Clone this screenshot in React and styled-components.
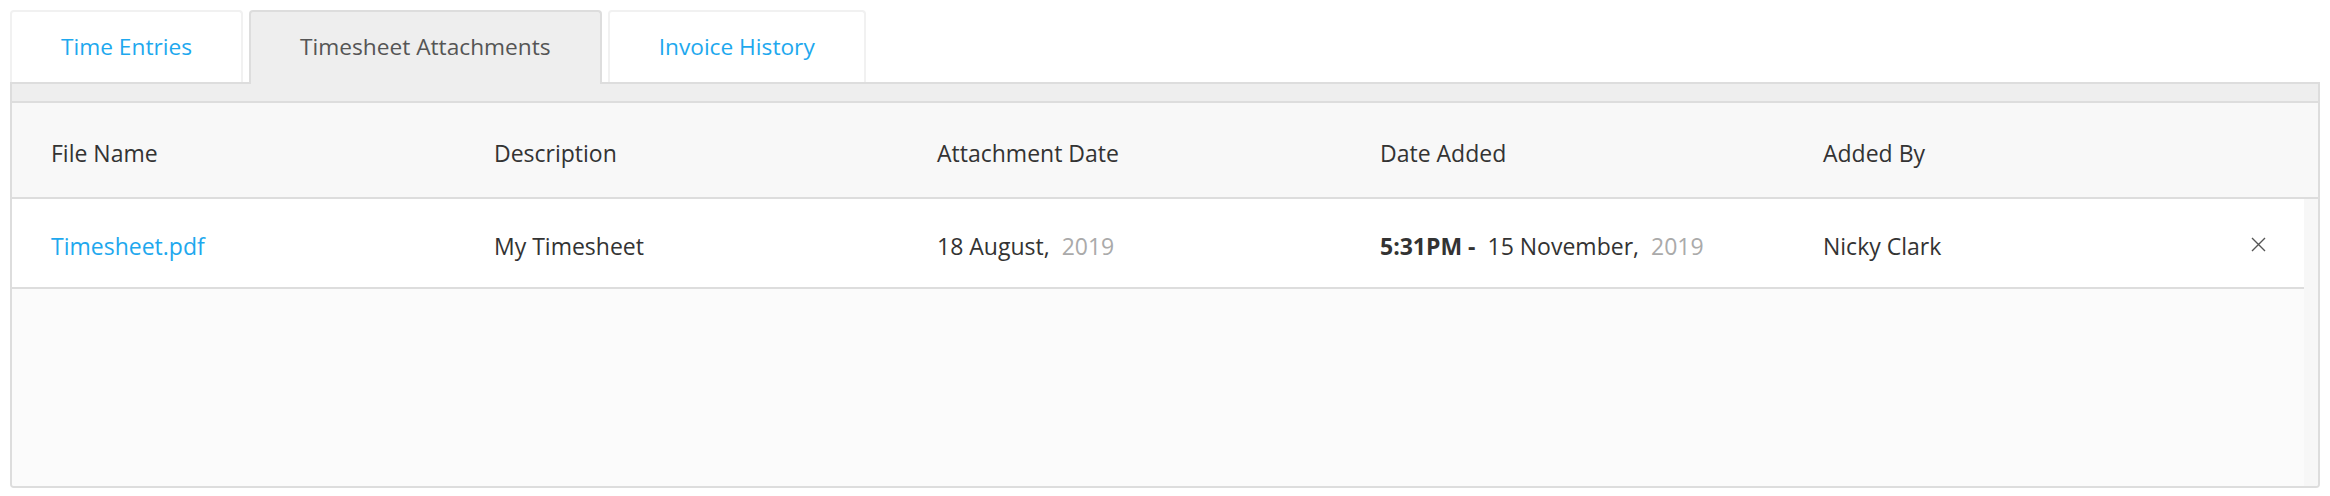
import React from "react";
import styled, { createGlobalStyle } from "styled-components";

const Global = createGlobalStyle`
  html, body { margin: 0; padding: 0; background: #fff; }
  * { box-sizing: border-box; }
  body { font-family: "Open Sans", "Noto Sans", sans-serif; color: #333; }
`;

const Page = styled.div`
  min-height: 100vh;
  padding: 10px 10px 8px 10px;
  display: flex;
  flex-direction: column;
`;

const TabBar = styled.div`
  display: flex;
  gap: 6px;
  position: relative;
  z-index: 1;
  margin-bottom: -2px;
`;

const Tab = styled.button`
  height: ${(p) => (p.$active ? 74 : 72)}px;
  padding: 0 49px ${(p) => (p.$active ? 2 : 0)}px;
  font-family: inherit;
  font-size: 22.7px;
  line-height: 1;
  background: ${(p) => (p.$active ? "#eeeeee" : "#ffffff")};
  color: ${(p) => (p.$active ? "#555555" : "#1ea8ee")};
  border: 2px solid ${(p) => (p.$active ? "#dddddd" : "#f1f1f1")};
  border-bottom: 0;
  border-radius: 4px 4px 0 0;
  cursor: pointer;
  display: flex;
  align-items: center;
`;

const Panel = styled.div`
  flex: 1;
  display: flex;
  flex-direction: column;
  border: 2px solid #dddddd;
  border-radius: 0 0 4px 4px;
  background: #fbfbfb;
  overflow: hidden;
`;

const Strip = styled.div`
  height: 19px;
  background: #eeeeee;
  border-bottom: 2px solid #dddddd;
`;

const columns = "repeat(5, 443px) 1fr";

const HeaderRow = styled.div`
  display: grid;
  grid-template-columns: ${columns};
  height: 96px;
  padding-top: 5px;
  background: #f8f8f8;
  border-bottom: 2px solid #dddddd;
  align-items: center;
`;

const HeadCell = styled.div`
  padding-left: 39px;
  font-size: 23px;
  color: #333;
`;

const BodyArea = styled.div`
  flex: 1;
  display: flex;
`;

const Rows = styled.div`
  flex: 1;
  background: #fbfbfb;
`;

const Gutter = styled.div`
  width: 14px;
  background: #f7f7f7;
`;

const Row = styled.div`
  display: grid;
  grid-template-columns: ${columns};
  height: 90px;
  padding-top: 5px;
  background: #ffffff;
  border-bottom: 2px solid #dddddd;
  align-items: center;
`;

const Cell = styled.div`
  padding-left: ${(p) => (p.$right ? 0 : 39)}px;
  padding-right: ${(p) => (p.$right ? 38 : 0)}px;
  font-size: 23px;
  color: #333;
  white-space: nowrap;
  display: flex;
  align-items: center;
  justify-content: ${(p) => (p.$right ? "flex-end" : "flex-start")};
`;

const Link = styled.a`
  color: #1ea8ee;
  text-decoration: none;
  cursor: pointer;
`;

const Time = styled.b`
  font-weight: 700;
  margin-right: 12px;
`;

const Year = styled.span`
  color: #aaaaaa;
  margin-left: 12px;
`;

const CloseBtn = styled.button`
  border: 0;
  background: transparent;
  padding: 0;
  margin-top: -2px;
  width: 15px;
  height: 15px;
  display: flex;
  cursor: pointer;
`;

function CloseIcon() {
  return (
    <svg width="15" height="15" viewBox="0 0 15 15">
      <path d="M1 1L14 14M14 1L1 14" stroke="#555" strokeWidth="1.4" fill="none" />
    </svg>
  );
}

export default function App() {
  const tabs = ["Time Entries", "Timesheet Attachments", "Invoice History"];
  return (
    <>
      <Global />
      <Page>
        <TabBar>
          {tabs.map((t, i) => (
            <Tab key={t} $active={i === 1}>
              {t}
            </Tab>
          ))}
        </TabBar>
        <Panel>
          <Strip />
          <HeaderRow>
            <HeadCell>File Name</HeadCell>
            <HeadCell>Description</HeadCell>
            <HeadCell>Attachment Date</HeadCell>
            <HeadCell>Date Added</HeadCell>
            <HeadCell>Added By</HeadCell>
            <HeadCell />
          </HeaderRow>
          <BodyArea>
            <Rows>
              <Row>
                <Cell>
                  <Link>Timesheet.pdf</Link>
                </Cell>
                <Cell>My Timesheet</Cell>
                <Cell>
                  18 August,<Year>2019</Year>
                </Cell>
                <Cell>
                  <Time>5:31PM -</Time>15 November,<Year>2019</Year>
                </Cell>
                <Cell>Nicky Clark</Cell>
                <Cell $right>
                  <CloseBtn aria-label="Remove">
                    <CloseIcon />
                  </CloseBtn>
                </Cell>
              </Row>
            </Rows>
            <Gutter />
          </BodyArea>
        </Panel>
      </Page>
    </>
  );
}
